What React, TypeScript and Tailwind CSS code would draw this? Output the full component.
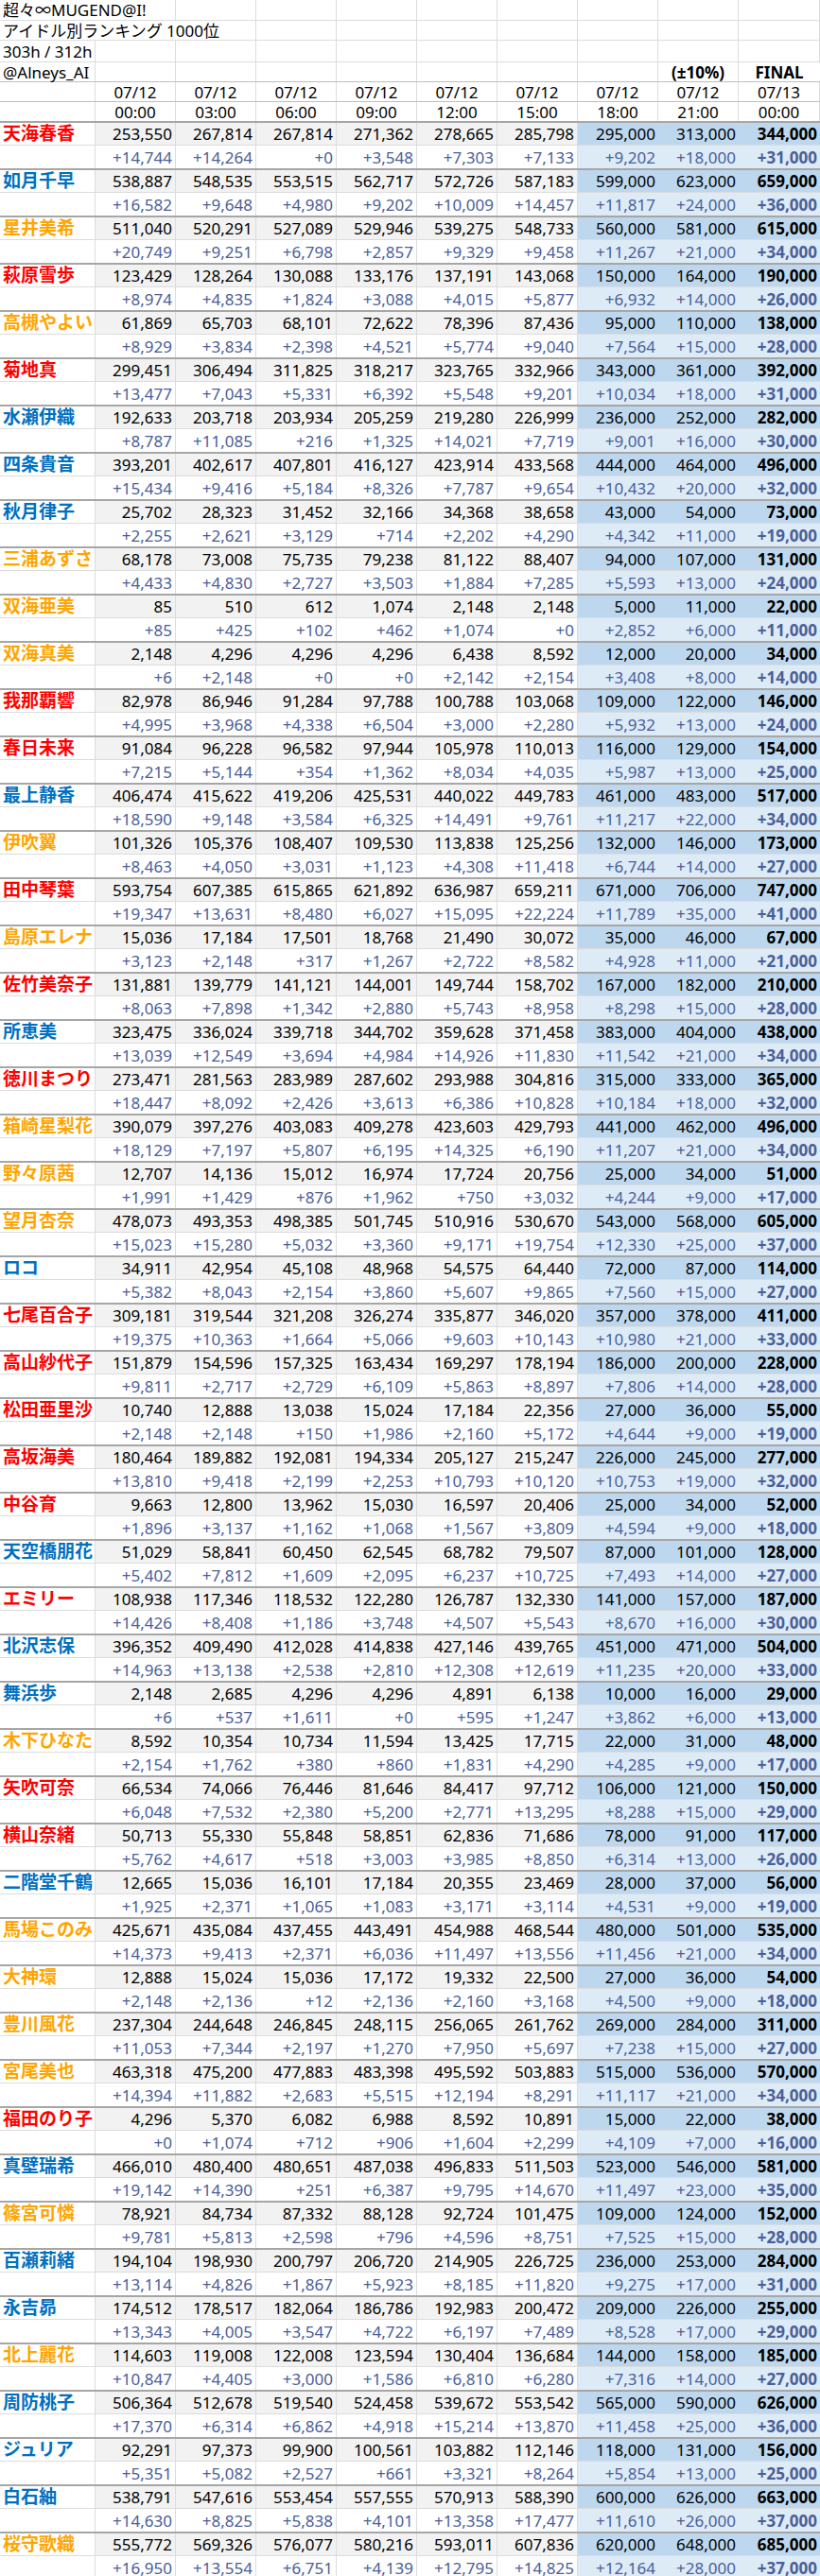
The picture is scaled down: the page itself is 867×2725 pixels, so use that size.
import React from 'react';

type Tone = 'r' | 'b' | 'o';

interface Idol {
  name: string;
  tone: Tone;
  vals: string;
  diffs: string;
}

const idols: Idol[] = [
  { name: '天海春香', tone: 'r', vals: '253,550 267,814 267,814 271,362 278,665 285,798 295,000 313,000 344,000', diffs: '+14,744 +14,264 +0 +3,548 +7,303 +7,133 +9,202 +18,000 +31,000' },
  { name: '如月千早', tone: 'b', vals: '538,887 548,535 553,515 562,717 572,726 587,183 599,000 623,000 659,000', diffs: '+16,582 +9,648 +4,980 +9,202 +10,009 +14,457 +11,817 +24,000 +36,000' },
  { name: '星井美希', tone: 'o', vals: '511,040 520,291 527,089 529,946 539,275 548,733 560,000 581,000 615,000', diffs: '+20,749 +9,251 +6,798 +2,857 +9,329 +9,458 +11,267 +21,000 +34,000' },
  { name: '萩原雪歩', tone: 'r', vals: '123,429 128,264 130,088 133,176 137,191 143,068 150,000 164,000 190,000', diffs: '+8,974 +4,835 +1,824 +3,088 +4,015 +5,877 +6,932 +14,000 +26,000' },
  { name: '高槻やよい', tone: 'o', vals: '61,869 65,703 68,101 72,622 78,396 87,436 95,000 110,000 138,000', diffs: '+8,929 +3,834 +2,398 +4,521 +5,774 +9,040 +7,564 +15,000 +28,000' },
  { name: '菊地真', tone: 'r', vals: '299,451 306,494 311,825 318,217 323,765 332,966 343,000 361,000 392,000', diffs: '+13,477 +7,043 +5,331 +6,392 +5,548 +9,201 +10,034 +18,000 +31,000' },
  { name: '水瀬伊織', tone: 'b', vals: '192,633 203,718 203,934 205,259 219,280 226,999 236,000 252,000 282,000', diffs: '+8,787 +11,085 +216 +1,325 +14,021 +7,719 +9,001 +16,000 +30,000' },
  { name: '四条貴音', tone: 'b', vals: '393,201 402,617 407,801 416,127 423,914 433,568 444,000 464,000 496,000', diffs: '+15,434 +9,416 +5,184 +8,326 +7,787 +9,654 +10,432 +20,000 +32,000' },
  { name: '秋月律子', tone: 'b', vals: '25,702 28,323 31,452 32,166 34,368 38,658 43,000 54,000 73,000', diffs: '+2,255 +2,621 +3,129 +714 +2,202 +4,290 +4,342 +11,000 +19,000' },
  { name: '三浦あずさ', tone: 'o', vals: '68,178 73,008 75,735 79,238 81,122 88,407 94,000 107,000 131,000', diffs: '+4,433 +4,830 +2,727 +3,503 +1,884 +7,285 +5,593 +13,000 +24,000' },
  { name: '双海亜美', tone: 'o', vals: '85 510 612 1,074 2,148 2,148 5,000 11,000 22,000', diffs: '+85 +425 +102 +462 +1,074 +0 +2,852 +6,000 +11,000' },
  { name: '双海真美', tone: 'o', vals: '2,148 4,296 4,296 4,296 6,438 8,592 12,000 20,000 34,000', diffs: '+6 +2,148 +0 +0 +2,142 +2,154 +3,408 +8,000 +14,000' },
  { name: '我那覇響', tone: 'r', vals: '82,978 86,946 91,284 97,788 100,788 103,068 109,000 122,000 146,000', diffs: '+4,995 +3,968 +4,338 +6,504 +3,000 +2,280 +5,932 +13,000 +24,000' },
  { name: '春日未来', tone: 'r', vals: '91,084 96,228 96,582 97,944 105,978 110,013 116,000 129,000 154,000', diffs: '+7,215 +5,144 +354 +1,362 +8,034 +4,035 +5,987 +13,000 +25,000' },
  { name: '最上静香', tone: 'b', vals: '406,474 415,622 419,206 425,531 440,022 449,783 461,000 483,000 517,000', diffs: '+18,590 +9,148 +3,584 +6,325 +14,491 +9,761 +11,217 +22,000 +34,000' },
  { name: '伊吹翼', tone: 'o', vals: '101,326 105,376 108,407 109,530 113,838 125,256 132,000 146,000 173,000', diffs: '+8,463 +4,050 +3,031 +1,123 +4,308 +11,418 +6,744 +14,000 +27,000' },
  { name: '田中琴葉', tone: 'r', vals: '593,754 607,385 615,865 621,892 636,987 659,211 671,000 706,000 747,000', diffs: '+19,347 +13,631 +8,480 +6,027 +15,095 +22,224 +11,789 +35,000 +41,000' },
  { name: '島原エレナ', tone: 'o', vals: '15,036 17,184 17,501 18,768 21,490 30,072 35,000 46,000 67,000', diffs: '+3,123 +2,148 +317 +1,267 +2,722 +8,582 +4,928 +11,000 +21,000' },
  { name: '佐竹美奈子', tone: 'r', vals: '131,881 139,779 141,121 144,001 149,744 158,702 167,000 182,000 210,000', diffs: '+8,063 +7,898 +1,342 +2,880 +5,743 +8,958 +8,298 +15,000 +28,000' },
  { name: '所恵美', tone: 'b', vals: '323,475 336,024 339,718 344,702 359,628 371,458 383,000 404,000 438,000', diffs: '+13,039 +12,549 +3,694 +4,984 +14,926 +11,830 +11,542 +21,000 +34,000' },
  { name: '徳川まつり', tone: 'r', vals: '273,471 281,563 283,989 287,602 293,988 304,816 315,000 333,000 365,000', diffs: '+18,447 +8,092 +2,426 +3,613 +6,386 +10,828 +10,184 +18,000 +32,000' },
  { name: '箱崎星梨花', tone: 'o', vals: '390,079 397,276 403,083 409,278 423,603 429,793 441,000 462,000 496,000', diffs: '+18,129 +7,197 +5,807 +6,195 +14,325 +6,190 +11,207 +21,000 +34,000' },
  { name: '野々原茜', tone: 'o', vals: '12,707 14,136 15,012 16,974 17,724 20,756 25,000 34,000 51,000', diffs: '+1,991 +1,429 +876 +1,962 +750 +3,032 +4,244 +9,000 +17,000' },
  { name: '望月杏奈', tone: 'o', vals: '478,073 493,353 498,385 501,745 510,916 530,670 543,000 568,000 605,000', diffs: '+15,023 +15,280 +5,032 +3,360 +9,171 +19,754 +12,330 +25,000 +37,000' },
  { name: 'ロコ', tone: 'b', vals: '34,911 42,954 45,108 48,968 54,575 64,440 72,000 87,000 114,000', diffs: '+5,382 +8,043 +2,154 +3,860 +5,607 +9,865 +7,560 +15,000 +27,000' },
  { name: '七尾百合子', tone: 'r', vals: '309,181 319,544 321,208 326,274 335,877 346,020 357,000 378,000 411,000', diffs: '+19,375 +10,363 +1,664 +5,066 +9,603 +10,143 +10,980 +21,000 +33,000' },
  { name: '高山紗代子', tone: 'r', vals: '151,879 154,596 157,325 163,434 169,297 178,194 186,000 200,000 228,000', diffs: '+9,811 +2,717 +2,729 +6,109 +5,863 +8,897 +7,806 +14,000 +28,000' },
  { name: '松田亜里沙', tone: 'r', vals: '10,740 12,888 13,038 15,024 17,184 22,356 27,000 36,000 55,000', diffs: '+2,148 +2,148 +150 +1,986 +2,160 +5,172 +4,644 +9,000 +19,000' },
  { name: '高坂海美', tone: 'r', vals: '180,464 189,882 192,081 194,334 205,127 215,247 226,000 245,000 277,000', diffs: '+13,810 +9,418 +2,199 +2,253 +10,793 +10,120 +10,753 +19,000 +32,000' },
  { name: '中谷育', tone: 'r', vals: '9,663 12,800 13,962 15,030 16,597 20,406 25,000 34,000 52,000', diffs: '+1,896 +3,137 +1,162 +1,068 +1,567 +3,809 +4,594 +9,000 +18,000' },
  { name: '天空橋朋花', tone: 'b', vals: '51,029 58,841 60,450 62,545 68,782 79,507 87,000 101,000 128,000', diffs: '+5,402 +7,812 +1,609 +2,095 +6,237 +10,725 +7,493 +14,000 +27,000' },
  { name: 'エミリー', tone: 'r', vals: '108,938 117,346 118,532 122,280 126,787 132,330 141,000 157,000 187,000', diffs: '+14,426 +8,408 +1,186 +3,748 +4,507 +5,543 +8,670 +16,000 +30,000' },
  { name: '北沢志保', tone: 'b', vals: '396,352 409,490 412,028 414,838 427,146 439,765 451,000 471,000 504,000', diffs: '+14,963 +13,138 +2,538 +2,810 +12,308 +12,619 +11,235 +20,000 +33,000' },
  { name: '舞浜歩', tone: 'b', vals: '2,148 2,685 4,296 4,296 4,891 6,138 10,000 16,000 29,000', diffs: '+6 +537 +1,611 +0 +595 +1,247 +3,862 +6,000 +13,000' },
  { name: '木下ひなた', tone: 'o', vals: '8,592 10,354 10,734 11,594 13,425 17,715 22,000 31,000 48,000', diffs: '+2,154 +1,762 +380 +860 +1,831 +4,290 +4,285 +9,000 +17,000' },
  { name: '矢吹可奈', tone: 'r', vals: '66,534 74,066 76,446 81,646 84,417 97,712 106,000 121,000 150,000', diffs: '+6,048 +7,532 +2,380 +5,200 +2,771 +13,295 +8,288 +15,000 +29,000' },
  { name: '横山奈緒', tone: 'r', vals: '50,713 55,330 55,848 58,851 62,836 71,686 78,000 91,000 117,000', diffs: '+5,762 +4,617 +518 +3,003 +3,985 +8,850 +6,314 +13,000 +26,000' },
  { name: '二階堂千鶴', tone: 'b', vals: '12,665 15,036 16,101 17,184 20,355 23,469 28,000 37,000 56,000', diffs: '+1,925 +2,371 +1,065 +1,083 +3,171 +3,114 +4,531 +9,000 +19,000' },
  { name: '馬場このみ', tone: 'o', vals: '425,671 435,084 437,455 443,491 454,988 468,544 480,000 501,000 535,000', diffs: '+14,373 +9,413 +2,371 +6,036 +11,497 +13,556 +11,456 +21,000 +34,000' },
  { name: '大神環', tone: 'o', vals: '12,888 15,024 15,036 17,172 19,332 22,500 27,000 36,000 54,000', diffs: '+2,148 +2,136 +12 +2,136 +2,160 +3,168 +4,500 +9,000 +18,000' },
  { name: '豊川風花', tone: 'o', vals: '237,304 244,648 246,845 248,115 256,065 261,762 269,000 284,000 311,000', diffs: '+11,053 +7,344 +2,197 +1,270 +7,950 +5,697 +7,238 +15,000 +27,000' },
  { name: '宮尾美也', tone: 'o', vals: '463,318 475,200 477,883 483,398 495,592 503,883 515,000 536,000 570,000', diffs: '+14,394 +11,882 +2,683 +5,515 +12,194 +8,291 +11,117 +21,000 +34,000' },
  { name: '福田のり子', tone: 'r', vals: '4,296 5,370 6,082 6,988 8,592 10,891 15,000 22,000 38,000', diffs: '+0 +1,074 +712 +906 +1,604 +2,299 +4,109 +7,000 +16,000' },
  { name: '真壁瑞希', tone: 'b', vals: '466,010 480,400 480,651 487,038 496,833 511,503 523,000 546,000 581,000', diffs: '+19,142 +14,390 +251 +6,387 +9,795 +14,670 +11,497 +23,000 +35,000' },
  { name: '篠宮可憐', tone: 'o', vals: '78,921 84,734 87,332 88,128 92,724 101,475 109,000 124,000 152,000', diffs: '+9,781 +5,813 +2,598 +796 +4,596 +8,751 +7,525 +15,000 +28,000' },
  { name: '百瀬莉緒', tone: 'b', vals: '194,104 198,930 200,797 206,720 214,905 226,725 236,000 253,000 284,000', diffs: '+13,114 +4,826 +1,867 +5,923 +8,185 +11,820 +9,275 +17,000 +31,000' },
  { name: '永吉昴', tone: 'b', vals: '174,512 178,517 182,064 186,786 192,983 200,472 209,000 226,000 255,000', diffs: '+13,343 +4,005 +3,547 +4,722 +6,197 +7,489 +8,528 +17,000 +29,000' },
  { name: '北上麗花', tone: 'o', vals: '114,603 119,008 122,008 123,594 130,404 136,684 144,000 158,000 185,000', diffs: '+10,847 +4,405 +3,000 +1,586 +6,810 +6,280 +7,316 +14,000 +27,000' },
  { name: '周防桃子', tone: 'b', vals: '506,364 512,678 519,540 524,458 539,672 553,542 565,000 590,000 626,000', diffs: '+17,370 +6,314 +6,862 +4,918 +15,214 +13,870 +11,458 +25,000 +36,000' },
  { name: 'ジュリア', tone: 'b', vals: '92,291 97,373 99,900 100,561 103,882 112,146 118,000 131,000 156,000', diffs: '+5,351 +5,082 +2,527 +661 +3,321 +8,264 +5,854 +13,000 +25,000' },
  { name: '白石紬', tone: 'b', vals: '538,791 547,616 553,454 557,555 570,913 588,390 600,000 626,000 663,000', diffs: '+14,630 +8,825 +5,838 +4,101 +13,358 +17,477 +11,610 +26,000 +37,000' },
  { name: '桜守歌織', tone: 'o', vals: '555,772 569,326 576,077 580,216 593,011 607,836 620,000 648,000 685,000', diffs: '+16,950 +13,554 +6,751 +4,139 +12,795 +14,825 +12,164 +28,000 +37,000' },
];

const toneClass: Record<Tone, string> = {
  r: 'text-[#ff0000]',
  b: 'text-[#0070c0]',
  o: 'text-[#ffa500]',
};

const times = ['00:00', '03:00', '06:00', '09:00', '12:00', '15:00', '18:00', '21:00', '00:00'];
const dates = ['07/12', '07/12', '07/12', '07/12', '07/12', '07/12', '07/12', '07/12', '07/13'];

const GRID = 'grid grid-cols-[101px_repeat(8,85px)_86px]';

function Blank({ n }: { n: number }) {
  return (
    <>
      {Array.from({ length: n }).map((_, i) => (
        <div key={i} className="border-r border-[#dcdcdc]" />
      ))}
    </>
  );
}

function IdolRows({ idol }: { idol: Idol }) {
  const vals = idol.vals.split(' ');
  const diffs = idol.diffs.split(' ');
  return (
    <div className="border-t-2 border-[#a6a6a6]">
      <div className={`${GRID} h-[23px]`}>
        <div className={`flex items-center pl-[3px] font-bold text-[19px] whitespace-nowrap border-r border-[#dcdcdc] ${toneClass[idol.tone]}`}>
          {idol.name}
        </div>
        {vals.map((v, i) => (
          <div
            key={i}
            className={`flex items-center justify-end pr-[3px] text-black ${i < 6 ? 'bg-[#f2f2f2] border-r border-[#dcdcdc]' : 'bg-[#bdd7ee]'} ${i === 8 ? 'font-bold' : ''}`}
          >
            {v}
          </div>
        ))}
      </div>
      <div className={`${GRID} h-[25px] border-t border-[#dcdcdc]`}>
        <div className="border-r border-[#dcdcdc]" />
        {diffs.map((v, i) => (
          <div
            key={i}
            className={`flex items-center justify-end pr-[3px] text-[#4a5e9a] ${i < 6 ? 'bg-white border-r border-[#dcdcdc]' : 'bg-[#ddebf7]'} ${i === 8 ? 'font-bold' : ''}`}
          >
            {v}
          </div>
        ))}
      </div>
    </div>
  );
}

export default function App() {
  return (
    <div className="w-[867px] bg-white text-[17px] leading-none text-black font-['Noto_Sans','Noto_Sans_CJK_JP',sans-serif]">
      <div className={`${GRID} h-[22px] border-b border-[#dcdcdc]`}>
        <div className="col-span-2 flex items-center pl-[3px] whitespace-nowrap border-r border-[#dcdcdc]">超々∞MUGEND@I!</div>
        <Blank n={8} />
      </div>
      <div className={`${GRID} h-[21px] border-b border-[#dcdcdc]`}>
        <div className="col-span-3 flex items-center pl-[3px] whitespace-nowrap border-r border-[#dcdcdc]">アイドル別ランキング 1000位</div>
        <Blank n={7} />
      </div>
      <div className={`${GRID} h-[23px] border-b border-[#dcdcdc]`}>
        <div className="flex items-center pl-[3px] whitespace-nowrap border-r border-[#dcdcdc]">303h / 312h</div>
        <Blank n={9} />
      </div>
      <div className={`${GRID} h-[21px] border-b border-[#bfbfbf]`}>
        <div className="flex items-center pl-[3px] whitespace-nowrap border-r border-[#dcdcdc]">@Alneys_AI</div>
        <Blank n={7} />
        <div className="flex items-center justify-center font-bold border-r border-[#dcdcdc]">(±10%)</div>
        <div className="flex items-center justify-center font-bold">FINAL</div>
      </div>
      <div className={`${GRID} h-[21px] border-b border-[#bfbfbf]`}>
        <div className="border-r border-[#dcdcdc]" />
        {dates.map((d, i) => (
          <div key={i} className="flex items-center justify-center border-r border-[#dcdcdc]">{d}</div>
        ))}
      </div>
      <div className={`${GRID} h-[20px]`}>
        <div className="border-r border-[#dcdcdc]" />
        {times.map((t, i) => (
          <div key={i} className="flex items-center justify-center border-r border-[#dcdcdc]">{t}</div>
        ))}
      </div>
      {idols.map((idol) => (
        <IdolRows key={idol.name} idol={idol} />
      ))}
    </div>
  );
}
